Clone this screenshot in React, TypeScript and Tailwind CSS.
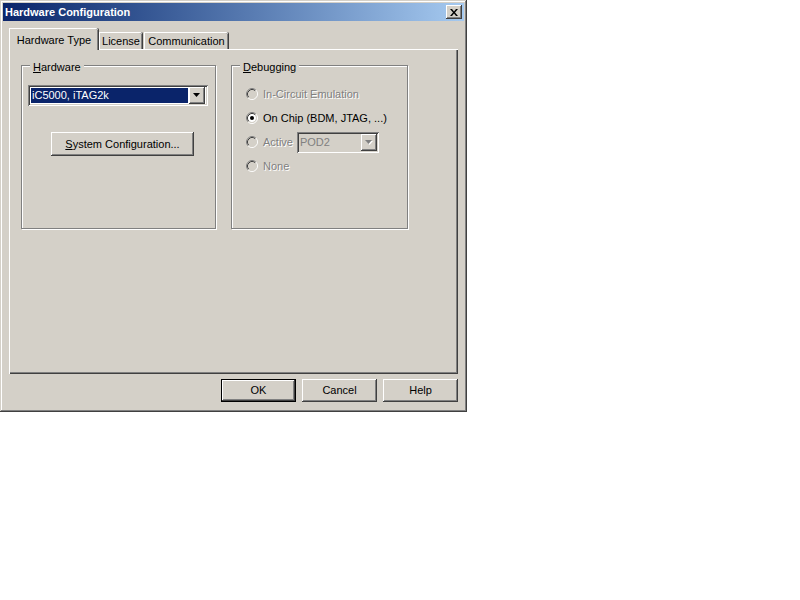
import React from "react";

const raised =
  "shadow-[inset_-1px_-1px_#404040,inset_1px_1px_#ffffff,inset_-2px_-2px_#808080,inset_2px_2px_#d4d0c8]";
const sunken =
  "shadow-[inset_1px_1px_#808080,inset_-1px_-1px_#ffffff,inset_2px_2px_#404040,inset_-2px_-2px_#d4d0c8]";
const disabledText = "text-[#808080] [text-shadow:1px_1px_0_#ffffff]";

const Radio: React.FC<{ checked?: boolean; disabled?: boolean }> = ({ checked, disabled }) => (
  <svg width="12" height="12" viewBox="0 0 12 12" className="shrink-0">
    <circle cx="6" cy="6" r="4" fill={disabled ? "#d4d0c8" : "#ffffff"} />
    <path d="M2.11 9.89 A5.5 5.5 0 0 1 9.89 2.11" fill="none" stroke="#808080" />
    <path d="M9.89 2.11 A5.5 5.5 0 0 1 2.11 9.89" fill="none" stroke="#ffffff" />
    <path d="M2.82 9.18 A4.5 4.5 0 0 1 9.18 2.82" fill="none" stroke="#404040" />
    <path d="M9.18 2.82 A4.5 4.5 0 0 1 2.82 9.18" fill="none" stroke="#d4d0c8" />
    {checked && <circle cx="6" cy="6" r="2" fill="#000000" />}
  </svg>
);

const Arrow: React.FC<{ disabled?: boolean }> = ({ disabled }) => (
  <svg width="8" height="5" viewBox="0 0 8 5">
    {disabled && <path d="M1 1h7L4.5 5z" fill="#ffffff" />}
    <path d="M0 0h7L3.5 4z" fill={disabled ? "#808080" : "#000000"} />
  </svg>
);

const GroupBox: React.FC<{ label: React.ReactNode; className: string; children?: React.ReactNode }> = ({
  label,
  className,
  children,
}) => (
  <div className={`relative border border-[#808080] shadow-[inset_1px_1px_#ffffff,1px_1px_#ffffff] ${className}`}>
    <span className="absolute left-[8px] top-[-5px] bg-[#d4d0c8] px-[3px] leading-[12px]">{label}</span>
    {children}
  </div>
);

const Button: React.FC<{ children: React.ReactNode; className?: string; isDefault?: boolean }> = ({
  children,
  className = "",
  isDefault,
}) =>
  isDefault ? (
    <div className={`border border-black bg-[#d4d0c8] ${className}`}>
      <div className={`flex h-full w-full items-center justify-center ${raised}`}>{children}</div>
    </div>
  ) : (
    <div className={`flex items-center justify-center bg-[#d4d0c8] ${raised} ${className}`}>{children}</div>
  );

export default function App() {
  return (
    <div className="min-h-[600px] w-[800px] bg-white font-['Liberation_Sans',Arial,sans-serif] text-[11px] text-black">
      <div
        className={`flex h-[412px] w-[467px] flex-col bg-[#d4d0c8] p-[3px] shadow-[inset_-1px_-1px_#404040,inset_1px_1px_#d4d0c8,inset_-2px_-2px_#808080,inset_2px_2px_#ffffff]`}
      >
        {/* title bar */}
        <div className="flex h-[18px] items-center justify-between bg-gradient-to-r from-[#0a246a] to-[#a6caf0] pl-[2px] pr-[2px]">
          <span className="font-bold text-white">Hardware Configuration</span>
          <div className={`flex h-[14px] w-[16px] items-center justify-center bg-[#d4d0c8] ${raised}`}>
            <svg width="8" height="7" viewBox="0 0 8 7">
              <path d="M0 0h2l2 2.5L6 0h2L5 3.5 8 7H6L4 4.5 2 7H0l3-3.5z" fill="#000000" />
            </svg>
          </div>
        </div>

        <div className="flex flex-col px-[6px] pt-[7px]">
          {/* tabs */}
          <div className="flex h-[21px] items-end">
            <div className="relative z-10 -mb-px flex h-[22px] w-[89px] items-center justify-center rounded-tr-[2px] border-l border-t border-white bg-[#d4d0c8] pt-[2px] shadow-[inset_-1px_0_#808080,1px_0_#404040]">
              Hardware Type
            </div>
            <div className="ml-px flex h-[17px] w-[43px] items-center justify-center rounded-tr-[2px] border-l border-t border-white shadow-[inset_-1px_0_#808080,1px_0_#404040]">
              License
            </div>
            <div className="ml-[2px] flex h-[17px] w-[84px] items-center justify-center rounded-tr-[2px] border-l border-t border-white shadow-[inset_-1px_0_#808080,1px_0_#404040]">
              Communication
            </div>
          </div>

          {/* panel */}
          <div className="flex h-[325px] gap-[15px] border-l border-t border-white pl-[11px] pt-[15px] shadow-[inset_-1px_-1px_#404040,inset_-2px_-2px_#808080]">
            <GroupBox
              className="h-[164px] w-[195px]"
              label={
                <>
                  <span className="underline">H</span>ardware
                </>
              }
            >
              <div className={`ml-[6px] mt-[19px] flex h-[21px] w-[180px] items-center bg-white p-[3px] ${sunken}`}>
                <div className="flex h-[15px] flex-1 items-center bg-[#0a246a] pl-[1px] text-white">iC5000, iTAG2k</div>
                <div className={`ml-[1px] flex h-[17px] w-[16px] items-center justify-center bg-[#d4d0c8] ${raised}`}>
                  <Arrow />
                </div>
              </div>
              <Button className="ml-[29px] mt-[26px] h-[24px] w-[143px]">
                <span>
                  <span className="underline">S</span>ystem Configuration...
                </span>
              </Button>
            </GroupBox>

            <GroupBox
              className="h-[164px] w-[177px]"
              label={
                <>
                  <span className="underline">D</span>ebugging
                </>
              }
            >
              <div className="ml-[14px] mt-[16px] flex flex-col">
                <div className="flex h-[24px] items-center gap-[5px]">
                  <Radio disabled />
                  <span className={disabledText}>In-Circuit Emulation</span>
                </div>
                <div className="flex h-[24px] items-center gap-[5px]">
                  <Radio checked />
                  <span>On Chip (BDM, JTAG, ...)</span>
                </div>
                <div className="flex h-[24px] items-center gap-[5px]">
                  <Radio disabled />
                  <span className={disabledText}>Active</span>
                  <div className={`-ml-[1px] flex h-[21px] w-[82px] items-center bg-[#d4d0c8] p-[2px] ${sunken}`}>
                    <span className="flex-1 pl-[1px] text-[#808080]">POD2</span>
                    <div className={`flex h-[17px] w-[16px] items-center justify-center bg-[#d4d0c8] ${raised}`}>
                      <Arrow disabled />
                    </div>
                  </div>
                </div>
                <div className="flex h-[24px] items-center gap-[5px]">
                  <Radio disabled />
                  <span className={disabledText}>None</span>
                </div>
              </div>
            </GroupBox>
          </div>

          {/* buttons */}
          <div className="mt-[5px] flex h-[23px] justify-end gap-[6px]">
            <Button isDefault className="h-[23px] w-[75px]">
              OK
            </Button>
            <Button className="h-[23px] w-[75px]">Cancel</Button>
            <Button className="h-[23px] w-[75px]">Help</Button>
          </div>
        </div>
      </div>
    </div>
  );
}
